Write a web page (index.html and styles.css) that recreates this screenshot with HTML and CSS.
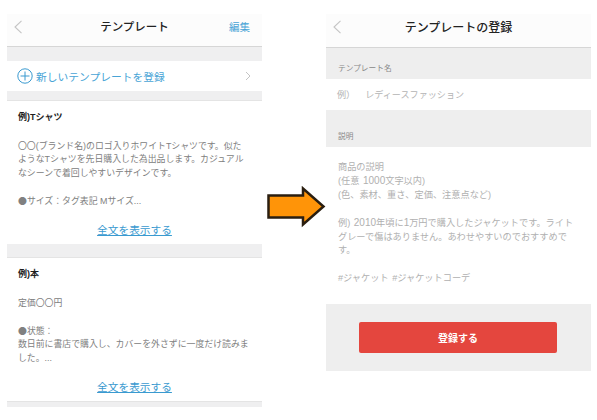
FILE: index.html
```html
<!DOCTYPE html>
<html lang="ja">
<head>
<meta charset="utf-8">
<title>テンプレート</title>
<link rel="stylesheet" href="styles.css">
</head>
<body>
<div class="page">
  <section class="screen left">
    <header class="nav nav-list">
      <svg class="back" width="10" height="14" viewBox="0 0 10 14"><path d="M8.500 .8 2 7l6.500 6.200" fill="none" stroke="#c4c4c4" stroke-width="1.100"/></svg>
      <h1 class="title title-list">テンプレート</h1>
      <span class="edit">編集</span>
    </header>
    <div class="gap g15"></div>
    <div class="new-row">
      <svg class="plus" width="16" height="16" viewBox="0 0 16 16"><circle cx="8" cy="8" r="7.200" fill="none" stroke="#3a9ad0" stroke-width="1"/><path d="M8 3.500v9M3.500 8h9" stroke="#3a9ad0" stroke-width="1"/></svg>
      <span class="new-label">新しいテンプレートを登録</span>
      <svg class="chev" width="6" height="10" viewBox="0 0 6 10"><path d="M1 1l4 4-4 4" fill="none" stroke="#c4c4c4" stroke-width="1"/></svg>
    </div>
    <div class="gap g10"></div>
    <article class="card">
      <h2 class="card-title">例)Tシャツ</h2>
      <p class="card-text">〇〇(ブランド名)のロゴ入りホワイトTシャツです。似た<br>ようなTシャツを先日購入した為出品します。カジュアル<br>なシーンで着回しやすいデザインです。<br><br><span class="dot">●</span>サイズ：タグ表記 Mサイズ...</p>
      <a class="more">全文を表示する</a>
    </article>
    <div class="gap g13"></div>
    <article class="card">
      <h2 class="card-title">例)本</h2>
      <p class="card-text">定価〇〇円<br><br><span class="dot">●</span>状態：<br>数日前に書店で購入し、カバーを外さずに一度だけ読みま<br>した。...</p>
      <a class="more">全文を表示する</a>
    </article>
    <div class="gap g7"></div>
  </section>

  <div class="arrow-slot">
    <svg width="59" height="42" viewBox="0 0 59 42"><path d="M1.500 9.500H36V2.500L56.500 20.500 36 38.500V31.500H1.500Z" fill="#ff9408" stroke="#2a1e10" stroke-width="2.500"/></svg>
  </div>

  <section class="screen right">
    <header class="nav nav-form">
      <svg class="back" width="10" height="14" viewBox="0 0 10 14"><path d="M8.500 .8 2 7l6.500 6.200" fill="none" stroke="#c4c4c4" stroke-width="1.100"/></svg>
      <h1 class="title">テンプレートの登録</h1>
    </header>
    <div class="label first">テンプレート名</div>
    <div class="name-field"><span>例）</span><span class="name-value">レディースファッション</span></div>
    <div class="label second">説明</div>
    <div class="desc">商品の説明<br>(任意 <span class="num">1000</span>文字以内)<br>(色、素材、重さ、定価、注意点など)<br><br>例) <span class="num">2010</span>年頃に<span class="num">1</span>万円で購入したジャケットです。ライト<br>グレーで傷はありません。あわせやすいのでおすすめで<br>す。<br><br>#ジャケット #ジャケットコーデ</div>
    <div class="action"><button class="submit">登録する</button></div>
  </section>
</div>
</body>
</html>
```
FILE: styles.css
```css
* { box-sizing: border-box; margin: 0; padding: 0; }
html, body { width: 597px; height: 420px; background: #fff; overflow: hidden; }
body { font-family: "Liberation Sans", "Noto Sans CJK JP", sans-serif; color: #8a8a8a; }
.page { display: flex; align-items: flex-start; padding-top: 14px; padding-left: 7px; }
.screen { display: flex; flex-direction: column; flex: none; }
.left { width: 255px; }
.right { width: 265px; }
.arrow-slot { width: 64px; flex: none; height: 214px; display: flex; align-items: flex-end; justify-content: flex-end; }
.nav { position: relative; display: flex; align-items: center; justify-content: center; background: #fcfcfc; border-bottom: 1px solid #d6d6d6; padding-bottom: 5px; }
.nav-list { height: 33px; }
.nav-form { height: 34px; }
.back { position: absolute; left: 6px; top: 6px; }
.title { font-size: 12px; font-weight: 500; color: #222; line-height: 1; }
.title-list { font-size: 11.500px; }
.edit { position: absolute; right: 12px; top: 5px; font-size: 10.500px; color: #48a4d6; line-height: 16px; }
.gap { background: #efeff0; }
.g15 { height: 14px; }
.g10 { height: 10px; border-bottom: 1px solid #e4e4e4; }
.g13 { height: 14px; border-bottom: 1px solid #e4e4e4; }
.g7 { height: 6px; border-top: 1px solid #e4e4e4; }
.new-row { height: 30px; display: flex; align-items: center; padding: 0 11px 0 10px; background: #fff; }
.plus { flex: none; }
.new-label { font-size: 10.750px; color: #48a4d6; margin-left: 3px; flex: 1; }
.chev { flex: none; }
.card { height: 143px; padding: 9px 4px 0 11px; display: flex; flex-direction: column; background: #fff; }
.card-title { font-size: 9px; line-height: 14px; font-weight: 700; color: #1e1e1e; }
.card-text { margin-top: 16px; font-size: 8.900px; line-height: 13.400px; height: 83px; color: #808080; }
.dot { font-family: "Noto Sans CJK JP", sans-serif; }
.more { align-self: center; margin-right: 7px; font-size: 10.700px; line-height: 14px; color: #3a9ad0; text-decoration: underline; }
.label { background: #eeeeee; font-size: 7.700px; color: #888; padding-left: 12px; }
.label.first { height: 31px; padding-top: 15px; line-height: 12px; }
.label.second { height: 37px; padding-top: 21px; line-height: 12px; }
.name-field { height: 31px; padding: 1px 0 0 11px; font-size: 9.100px; line-height: 31px; color: #b4b4b4; background: #fff; }
.name-value { margin-left: 10px; }
.desc { height: 157px; padding: 14px 4px 0 12px; font-size: 9.200px; line-height: 13.900px; word-spacing: 1px; color: #b0b0b0; background: #fff; }
.num { font-size: 10px; line-height: 1; }
.action { height: 67px; background: #eeeeee; padding: 18px 34px 0 33px; }
.submit { display: block; width: 198px; height: 31px; border: 0; border-radius: 2px; background: #e4463e; color: #fff; font: 700 10px "Liberation Sans", "Noto Sans CJK JP", sans-serif; }
```
